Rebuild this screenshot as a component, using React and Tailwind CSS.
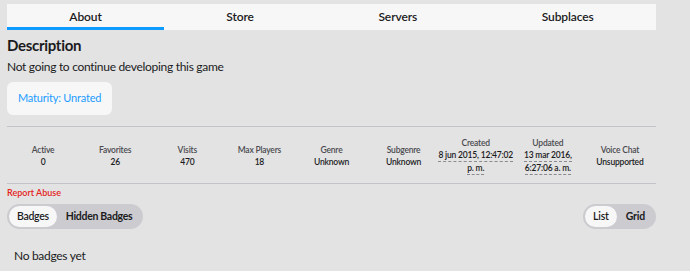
import React from 'react';

const tabs = ['About', 'Store', 'Servers', 'Subplaces'];

const stats = [
  { label: 'Active', value: ['0'] },
  { label: 'Favorites', value: ['26'] },
  { label: 'Visits', value: ['470'] },
  { label: 'Max Players', value: ['18'] },
  { label: 'Genre', value: ['Unknown'] },
  { label: 'Subgenre', value: ['Unknown'] },
  { label: 'Created', value: ['8 jun 2015, 12:47:02', 'p. m.'], dotted: true },
  { label: 'Updated', value: ['13 mar 2016,', '6:27:06 a. m.'], dotted: true },
  { label: 'Voice Chat', value: ['Unsupported'] },
];

const App = () => {
  return (
    <div className="w-[690px] h-[271px] overflow-hidden bg-[#e3e3e3] text-[#1b1b1d] font-['Lato',sans-serif]">
      <div className="w-[649px] ml-[7px] pt-[4px]">
        <div className="flex bg-[#f7f7f7] h-[26px]">
          {tabs.map((tab, i) => (
            <div
              key={tab}
              className={`flex-auto flex items-center justify-center text-[12px] tracking-[-0.1px] font-semibold ${
                i === 0 ? 'border-b-[3px] border-[#0e9bff] pt-[2px]' : ''
              }`}
            >
              {tab}
            </div>
          ))}
        </div>

        <h2 className="mt-[5px] text-[15px] tracking-[-0.3px] font-bold leading-[20px]">Description</h2>
        <p className="mt-[4px] text-[12px] tracking-[-0.3px] leading-[16px]">Not going to continue developing this game</p>

        <div className="mt-[7px] inline-flex items-center h-[33px] px-[11px] rounded-[6px] bg-[#f7f7f8] text-[#1b9cff] text-[11px] tracking-[-0.2px]">
          Maturity: Unrated
        </div>

        <div className="mt-[11px] border-t border-[#c4c4c8]" />

        <div className="grid grid-cols-9 h-[56px] items-center pt-[2px]">
          {stats.map((s) => (
            <div key={s.label} className="flex flex-col items-center text-[8.5px] tracking-[-0.2px] leading-[12.5px] font-semibold whitespace-nowrap">
              <span className="text-[#4a4a4f]">{s.label}</span>
              {s.value.map((line) => (
                <span
                  key={line}
                  className={s.dotted ? 'border-b border-dashed border-[#8a8a8f] leading-[12px]' : ''}
                >
                  {line}
                </span>
              ))}
            </div>
          ))}
        </div>

        <div className="border-t border-[#c4c4c8]" />

        <div className="mt-[3px] text-[9px] leading-[12px] font-semibold text-[#e5231b]">Report Abuse</div>

        <div className="mt-[5px] flex justify-between">
          <div className="flex items-center h-[25px] p-[2px] rounded-full bg-[#cbcbd0] text-[10.5px] tracking-[-0.3px] font-semibold">
            <div className="h-full px-[8px] flex items-center rounded-full bg-[#f7f7f8]">Badges</div>
            <div className="px-[9px] font-bold">Hidden Badges</div>
          </div>
          <div className="flex items-center h-[25px] p-[2px] rounded-full bg-[#cbcbd0] text-[10.5px] tracking-[-0.2px] font-semibold">
            <div className="h-full px-[8px] flex items-center rounded-full bg-[#f7f7f8]">List</div>
            <div className="px-[9px] font-bold">Grid</div>
          </div>
        </div>

        <p className="mt-[19px] ml-[7px] text-[12px] tracking-[-0.3px] leading-[16px]">No badges yet</p>
      </div>
    </div>
  );
};

export default App;
